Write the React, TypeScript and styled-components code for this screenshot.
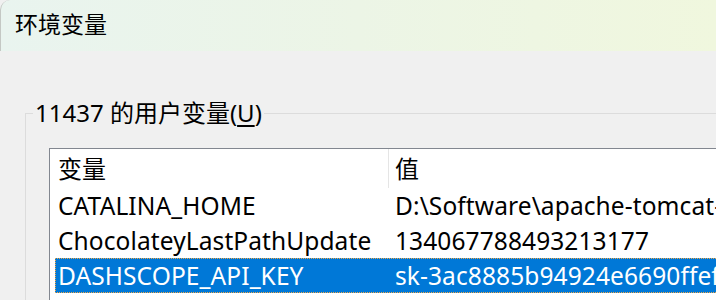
import React from 'react';
import styled, { createGlobalStyle } from 'styled-components';

type EnvVar = { name: string; value: string };

const userVars: EnvVar[] = [
  { name: 'CATALINA_HOME', value: 'D:\\Software\\apache-tomcat-9.0.85' },
  { name: 'ChocolateyLastPathUpdate', value: '134067788493213177' },
  { name: 'DASHSCOPE_API_KEY', value: 'sk-3ac8885b94924e6690ffef2b1c0d7a3e' },
];

const App: React.FC = () => {
  return (
    <>
      <GlobalStyle />
      <SWindow>
        <STitleBar>环境变量</STitleBar>
        <SBody>
          <SGroup>
            <SLegend>
              11437 的用户变量(<u>U</u>)
            </SLegend>
            <SList>
              <SHeader>
                <SHeadCell $divider>变量</SHeadCell>
                <SHeadCell>值</SHeadCell>
              </SHeader>
              {userVars.map((v, i) => (
                <SRow key={v.name} $selected={i === userVars.length - 1}>
                  <SNameCell>{v.name}</SNameCell>
                  <SValueCell>{v.value}</SValueCell>
                </SRow>
              ))}
            </SList>
          </SGroup>
        </SBody>
      </SWindow>
    </>
  );
};

export default App;

const GlobalStyle = createGlobalStyle`
  html, body {
    margin: 0;
    padding: 0;
    background: #f0f0f0;
    overflow: hidden;
  }
`;

const SWindow = styled.div`
  width: 716px;
  height: 300px;
  overflow: hidden;
  display: flex;
  flex-direction: column;
  background: #f0f0f0;
  font-family: 'Noto Sans', 'Noto Sans CJK SC', sans-serif;
  color: #000;
`;

const STitleBar = styled.div`
  height: 51px;
  flex: none;
  box-sizing: border-box;
  display: flex;
  align-items: center;
  padding: 0 0 5px 14px;
  font-family: 'Noto Sans CJK SC', sans-serif;
  font-size: 23px;
  background: linear-gradient(90deg, #e9f4ef 0%, #ecf5e6 50%, #f0f7de 100%);
  border-top-left-radius: 10px;
  border-left: 1px solid #c4c8c4;
`;

const SBody = styled.div`
  flex: 1;
  padding-top: 47px;
  min-height: 0;
`;

const SGroup = styled.fieldset`
  margin: 0 0 0 25px;
  padding: 20px 0 0 7px;
  border: 1px solid #dcdcdc;
  border-right: none;
  border-bottom: none;
  height: 100%;
  box-sizing: border-box;
  min-width: 0;
`;

const SLegend = styled.legend`
  padding: 0 2px;
  font-size: 24px;
  line-height: 30px;

  u {
    text-underline-offset: 3px;
  }
`;

const SList = styled.div`
  margin-left: 16px;
  width: 720px;
  height: 200px;
  background: #fff;
  border: 1px solid #828790;
  font-size: 24.5px;
`;

const SHeader = styled.div`
  display: grid;
  grid-template-columns: 339px 1fr;
  height: 39px;
  line-height: 39px;
  font-size: 24px;
`;

const SHeadCell = styled.div<{ $divider?: boolean }>`
  padding-left: ${(p) => (p.$divider ? '8px' : '6px')};
  border-right: ${(p) => (p.$divider ? '1px solid #e5e5e5' : 'none')};
  white-space: nowrap;
`;

const SRow = styled.div<{ $selected?: boolean }>`
  display: grid;
  grid-template-columns: 334px 1fr;
  margin-left: 5px;
  height: 35px;
  line-height: 35px;
  box-sizing: border-box;
  white-space: nowrap;
  letter-spacing: 0.1px;
  background: ${(p) => (p.$selected ? '#0078d7' : 'transparent')};
  color: ${(p) => (p.$selected ? '#fff' : '#000')};
  outline: ${(p) => (p.$selected ? '1px dotted #f0a848' : 'none')};
  outline-offset: -1px;
`;

const SNameCell = styled.div`
  padding-left: 3px;
  overflow: hidden;
`;

const SValueCell = styled.div`
  padding-left: 6px;
  overflow: hidden;
`;
